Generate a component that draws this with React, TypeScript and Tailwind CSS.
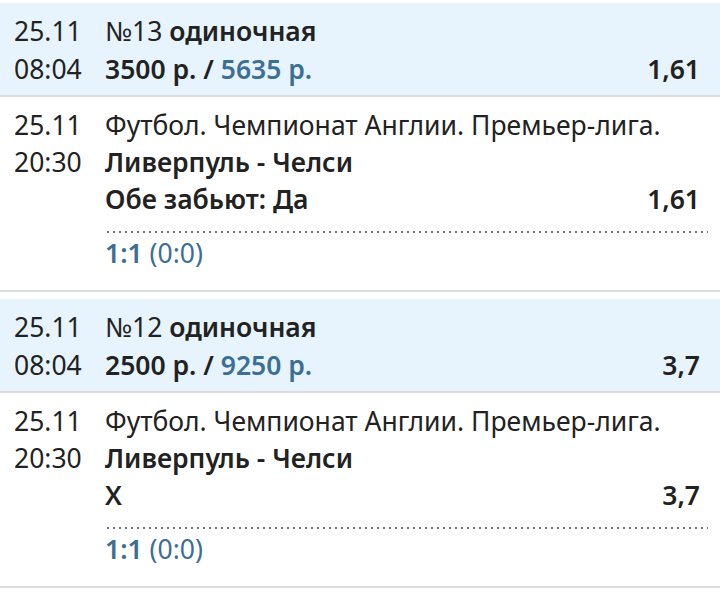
const BETS = [
    { id: 13, stake: '3500 р.', win: '5635 р.', coef: '1,61', outcome: 'Обе забьют: Да' },
    { id: 12, stake: '2500 р.', win: '9250 р.', coef: '3,7', outcome: 'Х' },
];

function BetCard({ bet }: { bet: (typeof BETS)[number] }) {
    return (
        <div>
            <div className="bg-[#e7f4fd] px-[14px] pt-[9px] pb-[7px] leading-[38px]">
                <div className="flex">
                    <span className="w-[91px] shrink-0">25.11</span>
                    <span>
                        №{bet.id} <span className="font-semibold">одиночная</span>
                    </span>
                </div>
                <div className="flex">
                    <span className="w-[91px] shrink-0">08:04</span>
                    <span className="font-semibold">
                        {bet.stake} / <span className="text-[#3c6f96]">{bet.win}</span>
                    </span>
                    <span className="ml-auto pr-[6px] font-semibold">{bet.coef}</span>
                </div>
            </div>
            <div className="h-[2px] bg-[#dcdcdc]" />
            <div className="flex pl-[14px] pr-[12px] pt-[10px] pb-[18px] leading-[37px]">
                <div className="w-[91px] shrink-0">
                    <div>25.11</div>
                    <div>20:30</div>
                </div>
                <div className="flex-1">
                    <div className="whitespace-nowrap">Футбол. Чемпионат Англии. Премьер-лига.</div>
                    <div className="font-semibold">Ливерпуль - Челси</div>
                    <div className="flex pr-[8px] pb-[13px]">
                        <span className="font-semibold">{bet.outcome}</span>
                        <span className="ml-auto font-semibold">{bet.coef}</span>
                    </div>
                    <div className="h-[2px] bg-[radial-gradient(circle,#777_0.9px,transparent_1.3px)] bg-[length:6px_2px]" />
                    <div className="pt-[2px] text-[#3c6f96]">
                        <span className="font-semibold">1:1</span> (0:0)
                    </div>
                </div>
            </div>
            <div className="h-[2px] bg-[#dcdcdc]" />
        </div>
    );
}

export default function App() {
    return (
        <div className="h-[590px] w-[720px] overflow-hidden bg-white pt-[3px] text-[26.5px] text-[#222] [font-family:'Noto_Sans',sans-serif]">
            {BETS.map((bet, i) => (
                <div key={bet.id} className={i === 0 ? '' : 'mt-[7px]'}>
                    <BetCard bet={bet} />
                </div>
            ))}
        </div>
    );
}
